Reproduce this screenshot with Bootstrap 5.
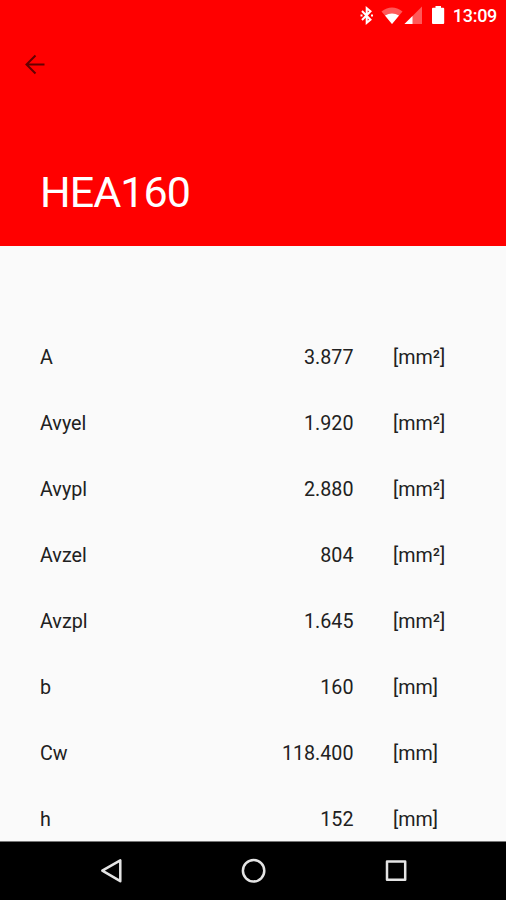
<!DOCTYPE html>
<html lang="en">
<head>
<meta charset="utf-8">
<meta name="viewport" content="width=device-width, initial-scale=1">
<title>HEA160</title>
<link rel="stylesheet" href="https://cdn.jsdelivr.net/npm/bootstrap@5.3.0/dist/css/bootstrap.min.css">
<style>
body { font-family: Roboto, "Liberation Sans", sans-serif; background: #fafafa; color: #212121; height: 900px; }
.app-header { background: #f00; height: 246px; }
.status-bar { height: 32px; padding-right: 9px; }
.status-icons { margin-right: 1.500px; }
.clock { font-size: 18px; font-weight: 500; line-height: 32px; letter-spacing: -.3px; }
.back-btn { margin: 21px 0 0 24px; width: 24px; height: 24px; }
.section-name { font-size: 43px; line-height: 50px; padding: 0 0 29px 40px; letter-spacing: -.95px; }
.props { padding-top: 79px; font-size: 19.7px; }
.prop-row { height: 66px; padding-left: 40px; }
.prop-name { width: 160px; }
.prop-value { width: 153.500px; }
.prop-unit { padding-left: 39.500px; }
.nav-keys { background: #000; height: 59px; border-top: 1px solid #777; }
</style>
<script src="https://cdn.jsdelivr.net/npm/bootstrap@5.3.0/dist/js/bootstrap.bundle.min.js"></script>
</head>
<body class="d-flex flex-column overflow-hidden">
<header class="app-header d-flex flex-column flex-shrink-0 text-white">
  <div class="status-bar d-flex justify-content-end align-items-center">
    <svg class="status-icons" width="92" height="32" viewBox="0 0 92 32" aria-hidden="true">
      <path d="M3 11 11.500 19.700 7.700 22.800V8.200l3.800 3.100L3 20" fill="none" stroke="#fff" stroke-width="2"/>
      <path d="M1.500 15.500h2M12 15.500h2" stroke="#fff" stroke-width="2"/>
      <path d="M22.500 11.500Q33 3.500 43.500 11.500L33 24Z" fill="#fff" opacity=".35"/>
      <path d="M26 15.500Q33 11.500 40 15.500L33 24Z" fill="#fff"/>
      <path d="M45.500 24 63 6.500V24Z" fill="#fff" opacity=".35"/>
      <path d="M45.500 24 53.500 16V24Z" fill="#fff"/>
      <path d="M76.500 6h5.500v1.800h2.200q1 0 1 1V23q0 1-1 1H74q-1 0-1-1V8.800q0-1 1-1h2.500Z" fill="#fff"/>
    </svg>
    <span class="clock">13:09</span>
  </div>
  <a class="back-btn d-block" href="#" aria-label="Back">
    <svg class="d-block" width="24" height="24" viewBox="0 0 24 24" fill="none" stroke="#640000" stroke-width="2"><path d="M20.500 11.500H3M11.500 2.500 2.500 11.500 11.500 20.500"/></svg>
  </a>
  <h1 class="section-name fw-normal mt-auto mb-0">HEA160</h1>
</header>
<main class="props flex-grow-1 overflow-hidden">
  <div class="prop-row d-flex align-items-center"><span class="prop-name">A</span><span class="prop-value text-end">3.877</span><span class="prop-unit">[mm²]</span></div>
  <div class="prop-row d-flex align-items-center"><span class="prop-name">Avyel</span><span class="prop-value text-end">1.920</span><span class="prop-unit">[mm²]</span></div>
  <div class="prop-row d-flex align-items-center"><span class="prop-name">Avypl</span><span class="prop-value text-end">2.880</span><span class="prop-unit">[mm²]</span></div>
  <div class="prop-row d-flex align-items-center"><span class="prop-name">Avzel</span><span class="prop-value text-end">804</span><span class="prop-unit">[mm²]</span></div>
  <div class="prop-row d-flex align-items-center"><span class="prop-name">Avzpl</span><span class="prop-value text-end">1.645</span><span class="prop-unit">[mm²]</span></div>
  <div class="prop-row d-flex align-items-center"><span class="prop-name">b</span><span class="prop-value text-end">160</span><span class="prop-unit">[mm]</span></div>
  <div class="prop-row d-flex align-items-center"><span class="prop-name">Cw</span><span class="prop-value text-end">118.400</span><span class="prop-unit">[mm]</span></div>
  <div class="prop-row d-flex align-items-center"><span class="prop-name">h</span><span class="prop-value text-end">152</span><span class="prop-unit">[mm]</span></div>
</main>
<nav class="nav-keys flex-shrink-0" aria-label="System">
  <svg class="d-block" width="506" height="58" viewBox="0 0 506 58" fill="none" stroke="#e4e4e4" stroke-width="2.500" stroke-linejoin="round">
    <path d="M120.300 18.300V39.200L102.300 28.700Z"/>
    <circle cx="253.600" cy="28.700" r="10.700"/>
    <rect x="387" y="19.500" width="18.200" height="18.200"/>
  </svg>
</nav>
</body>
</html>
